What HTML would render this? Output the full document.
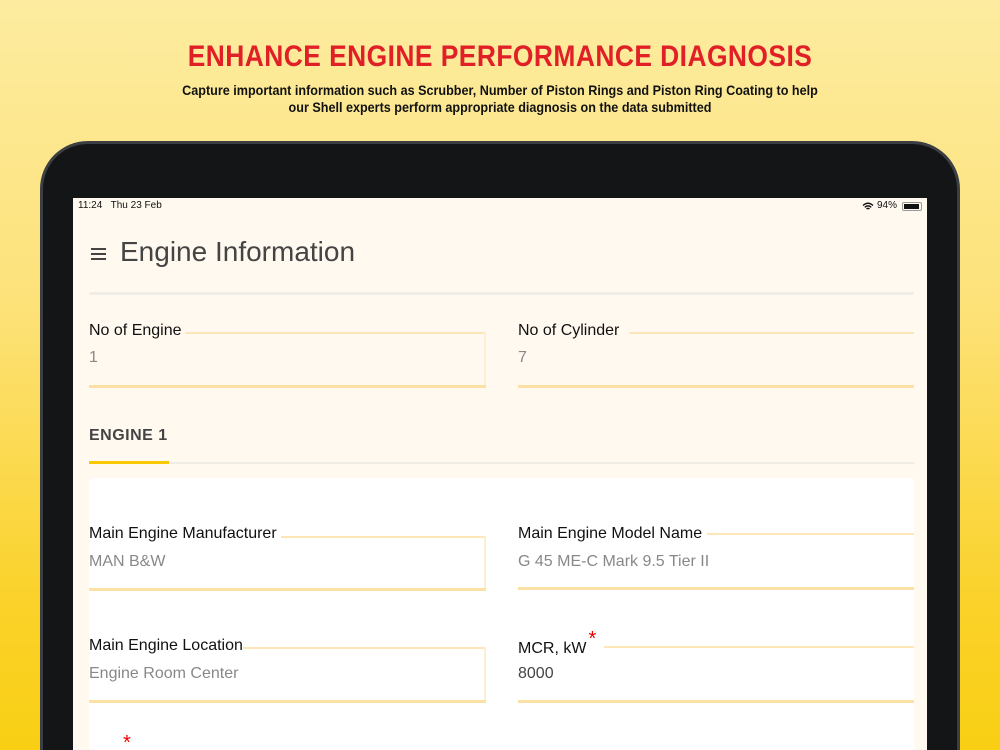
<!DOCTYPE html>
<html style="width:1000px;height:750px;overflow:hidden"><head><meta charset="utf-8"><style>
*{margin:0;padding:0;box-sizing:border-box}
body{width:1000px;height:750px;overflow:hidden;font-family:"Liberation Sans",sans-serif}
.wrap{position:absolute;left:0;top:0;width:1000px;height:750px;overflow:hidden;background:linear-gradient(180deg,#fdeca0 0%,#fde27a 40%,#fad22a 80%,#f9cf14 100%)}
.h1{position:absolute;top:40px;left:0;width:1000px;text-align:center;color:#e01f26;font-size:30px;font-weight:bold;letter-spacing:0.5px;transform:scaleX(0.88)}
.sub{position:absolute;top:82px;left:0;width:1000px;text-align:center;color:#111;font-size:14px;font-weight:bold;line-height:17px;transform:scaleX(0.9)}
.bezel{position:absolute;left:40px;top:141px;width:920px;height:609px;background:#141517;border:3px solid #3b3f43;border-bottom:none;border-radius:48px 48px 0 0}
.screen{position:absolute;left:73px;top:198px;width:854px;height:552px;background:#fff9ef;overflow:hidden}
.st{position:absolute;top:2px;font-size:10px;color:#111}
.title{position:absolute;left:47px;top:38px;font-size:28px;color:#444}
.ham{position:absolute;left:18px;top:50px;width:15px}
.ham i{display:block;height:2px;background:#444;margin-bottom:3px}
.sep{position:absolute;left:16px;width:825px;top:94px;height:3px;background:#f0ede6;border-radius:2px}
.lab{position:absolute;font-size:16px;color:#111}
.val{position:absolute;font-size:16px;color:#888}
.line{position:absolute;height:2px;background:#fde7b8}
.bl{position:absolute;height:3px;background:#fde0a6}
.card{position:absolute;left:16px;top:280px;width:825px;height:272px;background:#fff;border-radius:4px 4px 0 0}
</style></head><body><div class="wrap">
<div class="h1">ENHANCE ENGINE PERFORMANCE DIAGNOSIS</div>
<div class="sub">Capture important information such as Scrubber, Number of Piston Rings and Piston Ring Coating to help<br>our Shell experts perform appropriate diagnosis on the data submitted</div>
<div class="bezel"></div>
<div class="screen">
 <div class="st" style="left:5px">11:24&nbsp;&nbsp;&nbsp;Thu 23 Feb</div>
 <div class="st" style="left:804px">94%</div>
 <svg style="position:absolute;left:789px;top:4px" width="12" height="9" viewBox="0 0 12 9"><path d="M1 3.5Q6 -1 11 3.5M2.8 5.3Q6 2.5 9.2 5.3M4.5 7Q6 5.8 7.5 7" stroke="#111" stroke-width="1.4" fill="none"/></svg>
 <div style="position:absolute;left:829px;top:4px;width:20px;height:9px;border:1px solid #999;border-radius:2px;padding:1px"><div style="background:#111;height:100%;width:92%"></div></div>
 <div class="ham"><i></i><i></i><i></i></div>
 <div class="title">Engine Information</div>
 <div class="sep"></div>
 <div class="lab" style="left:16px;top:124px">No of Engine</div>
 <div class="line" style="left:112px;width:301px;top:134px"></div>
 <div style="position:absolute;left:411px;top:134px;width:2px;height:54px;background:#fdf0d2"></div>
 <div class="val" style="left:16px;top:151px">1</div>
 <div class="bl" style="left:16px;width:397px;top:187px"></div>
 <div class="lab" style="left:445px;top:124px">No of Cylinder</div>
 <div class="line" style="left:556px;width:285px;top:134px"></div>
 <div class="val" style="left:445px;top:151px">7</div>
 <div class="bl" style="left:445px;width:396px;top:187px"></div>
 <div style="position:absolute;left:16px;top:229px;font-size:16px;font-weight:bold;color:#444;letter-spacing:0.5px">ENGINE 1</div>
 <div style="position:absolute;left:16px;top:264px;width:825px;height:2px;background:#efece6"></div>
 <div style="position:absolute;left:16px;top:263px;width:80px;height:3px;background:#f8c800"></div>
 <div class="card"></div>
 <div class="lab" style="left:16px;top:327px">Main Engine Manufacturer</div>
 <div class="line" style="left:208px;width:205px;top:338px"></div>
 <div style="position:absolute;left:411px;top:338px;width:2px;height:54px;background:#fdf0d2"></div>
 <div class="val" style="left:16px;top:355px">MAN B&amp;W</div>
 <div class="bl" style="left:16px;width:397px;top:390px"></div>
 <div class="lab" style="left:445px;top:327px">Main Engine Model Name</div>
 <div class="line" style="left:634px;width:207px;top:335px"></div>
 <div class="val" style="left:445px;top:355px">G 45 ME-C Mark 9.5 Tier II</div>
 <div class="bl" style="left:445px;width:396px;top:389px"></div>
 <div class="lab" style="left:16px;top:439px">Main Engine Location</div>
 <div class="line" style="left:170px;width:243px;top:449px"></div>
 <div style="position:absolute;left:411px;top:449px;width:2px;height:54px;background:#fdf0d2"></div>
 <div class="val" style="left:16px;top:467px">Engine Room Center</div>
 <div class="bl" style="left:16px;width:397px;top:502px"></div>
 <div class="lab" style="left:445px;top:438px">MCR, kW<span style="color:#e00;font-size:20px;position:relative;top:-8px;margin-left:2px">*</span></div>
 <div class="line" style="left:531px;width:310px;top:448px"></div>
 <div class="val" style="left:445px;top:467px;color:#444">8000</div>
 <div class="bl" style="left:445px;width:396px;top:502px"></div>
 <div style="position:absolute;left:50px;top:538px;color:#e00;font-size:20px;line-height:14px">*</div>
</div>
</div></body></html>
